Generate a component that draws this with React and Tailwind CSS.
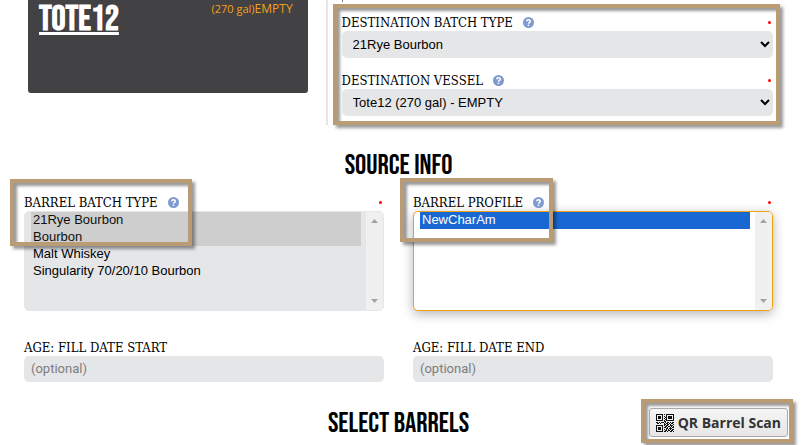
import React from 'react';

const QR_ROWS = [
    '111111101011111111',
    '100000100010000001',
    '101110101010111101',
    '101110100110111101',
    '101110101010111101',
    '100000100110000001',
    '111111101011111111',
    '000000001100000000',
    '110101110101101011',
    '011010001011010110',
    '000000001101101001',
    '111111101011001110',
    '100000100110110101',
    '101110101101001011',
    '101110100011011100',
    '101110101010101011',
    '100000100110110110',
    '111111101101001101',
];

const QrIcon = () => (
    <svg viewBox="0 0 18 18" className="h-[18px] w-[18px] shrink-0" shapeRendering="crispEdges" aria-hidden="true">
        {QR_ROWS.map((row, y) =>
            [...row].map((bit, x) => bit === '1' && <rect key={`${x}-${y}`} x={x} y={y} width="1" height="1" fill="#111" />)
        )}
    </svg>
);

const HelpIcon = () => (
    <button type="button" aria-label="Help" className="flex size-[11px] items-center justify-center rounded-full bg-[#7f9ad1]">
        <svg viewBox="0 0 11 11" className="size-[11px]" fill="none" stroke="#fff" strokeWidth="1.5">
            <path d="M3.7 4.3C3.7 2.2 7.3 2.2 7.3 4.2C7.3 5.4 5.5 5.3 5.5 6.7" />
            <path d="M5.5 7.6V9" />
        </svg>
    </button>
);

const FieldLabel = ({ htmlFor, text, help, required }) => (
    <div className="flex h-[17px] items-center gap-[10px] pr-[2px]">
        <label htmlFor={htmlFor} className="font-['DejaVu_Serif_Condensed','DejaVu_Serif',serif] text-[13px] leading-[17px] whitespace-nowrap text-black">
            {text}
        </label>
        {help && <HelpIcon />}
        {required && <span className="ml-auto size-[3px] rounded-full bg-[#ff0000]" />}
    </div>
);

const SelectField = ({ id, label, value }) => (
    <div>
        <FieldLabel htmlFor={id} text={label} help required />
        <select id={id} className="block h-[27px] w-full rounded-[5px] bg-[#e5e6e8] px-[7px] font-['Liberation_Sans',Arial,sans-serif] text-[13px] text-black">
            <option>{value}</option>
        </select>
    </div>
);

const ListField = ({ id, label, options, selected, focused }) => (
    <div>
        <FieldLabel htmlFor={id} text={label} help required />
        <div
            className={`flex h-[100px] overflow-hidden rounded-[5px] border ${
                focused ? 'border-[#f0a010] bg-white shadow-[0_3px_12px_rgba(0,0,0,0.3)]' : 'border-[#e5e6e8] bg-[#e5e6e8]'
            }`}
        >
            <select
                id={id}
                multiple
                autoFocus={focused}
                defaultValue={selected}
                className="h-full min-w-0 flex-1 pl-[6px] pr-[5px] font-['Liberation_Sans',Arial,sans-serif] text-[13px] leading-4 text-black outline-none [scrollbar-width:none]"
            >
                {options.map((o) => (
                    <option key={o} value={o} className="min-h-[17px] px-[2px] pb-[2px]">{o}</option>
                ))}
            </select>
            <div className="flex w-[17px] flex-col items-center justify-between bg-[#f0f0f0] py-[7px]">
                <svg viewBox="0 0 7 4" className="h-1 w-[7px]" fill="#a3a3a3"><path d="M3.5 0L7 4H0Z" /></svg>
                <svg viewBox="0 0 7 4" className="h-1 w-[7px]" fill="#a3a3a3"><path d="M3.5 4L7 0H0Z" /></svg>
            </div>
        </div>
    </div>
);

const DateField = ({ id, label }) => (
    <div>
        <FieldLabel htmlFor={id} text={label} />
        <input
            id={id}
            type="text"
            placeholder="(optional)"
            className="block h-[26px] w-full rounded-[5px] bg-[#e5e6e8] px-[7px] pb-[2px] font-[Roboto,sans-serif] text-[13px] placeholder:text-[#7d7d7d]"
        />
    </div>
);

const FRAME = 'border-4 border-[#b99c73] shadow-[3px_3px_3px_rgba(0,0,0,0.4),inset_3px_3px_3px_rgba(0,0,0,0.4)]';

const Heading = ({ children }) => (
    <h2 className="pt-[6px] text-center font-['Bebas_Neue',sans-serif] text-[28px] leading-7 font-normal whitespace-nowrap text-black">{children}</h2>
);

export default function App() {
    return (
        <main className="overflow-hidden bg-white">
            <section className="flex pr-[25px]">
                <div className="flex w-[42%] border-r-2 border-[#e6e6e6] pl-7 pr-[18px]">
                    <div className="flex h-[93px] flex-1 items-start justify-between rounded-b-[3px] bg-[#424143] pl-[11px] pr-[15px]">
                        <a
                            href="#tote12"
                            className="font-['Bebas_Neue',sans-serif] text-[35px] leading-[39px] font-bold text-white underline decoration-[3px] underline-offset-2 [text-decoration-skip-ink:none]"
                        >
                            TOTE12
                        </a>
                        <p className="flex items-baseline font-['Open_Sans',sans-serif] text-[12px] leading-[17px] text-[#f5a01a]">
                            <span className="text-[11px]">(270 gal)</span>EMPTY
                        </p>
                    </div>
                </div>
                <div className="ml-[5px] flex-1">
                    <div className="ml-[9px] h-[2px] w-px bg-[#777]" />
                    <div className={`mt-[2px] space-y-[14px] pt-[6px] pr-[3px] pb-[5px] pl-[5px] ${FRAME}`}>
                        <SelectField id="destBatch" label="DESTINATION BATCH TYPE" value="21Rye Bourbon" />
                        <SelectField id="destVessel" label="DESTINATION VESSEL" value="Tote12 (270 gal) - EMPTY" />
                    </div>
                </div>
            </section>

            <section className="pt-[21px] pr-8 pl-6">
                <Heading>SOURCE INFO</Heading>
                <div className="mt-[14px] grid grid-cols-2 gap-x-[29px] gap-y-7">
                    <div className="relative">
                        <ListField
                            id="barrelBatch"
                            label="BARREL BATCH TYPE"
                            options={['21Rye Bourbon', 'Bourbon', 'Malt Whiskey', 'Singularity 70/20/10 Bourbon']}
                            selected={['21Rye Bourbon', 'Bourbon']}
                        />
                        <div className={`pointer-events-none absolute -top-[15px] -left-[14px] h-[67px] w-[182px] ${FRAME}`} />
                    </div>
                    <div className="relative">
                        <ListField id="barrelProfile" label="BARREL PROFILE" options={['NewCharAm']} selected={['NewCharAm']} focused />
                        <div className={`pointer-events-none absolute -top-4 -left-[13px] h-16 w-[153px] ${FRAME}`} />
                    </div>
                    <DateField id="fillStart" label="AGE: FILL DATE START" />
                    <DateField id="fillEnd" label="AGE: FILL DATE END" />
                </div>
            </section>

            <section className="mt-[17px] grid grid-cols-[1fr_auto_1fr] items-center pr-3 pl-1">
                <div />
                <Heading>SELECT BARRELS</Heading>
                <div className={`justify-self-end pt-[5px] pr-px pb-[2px] pl-1 ${FRAME}`}>
                    <button
                        type="button"
                        className="flex h-[29px] items-center gap-1 rounded-[3px] border border-[#a9a9a9] bg-linear-to-b from-[#f5f5f5] to-[#e6e6e6] px-[6px] font-['Open_Sans',sans-serif] text-[14px] font-bold whitespace-nowrap text-[#333]"
                    >
                        <QrIcon />
                        QR Barrel Scan
                    </button>
                </div>
            </section>
            <div className="h-[2px]" />
        </main>
    );
}
